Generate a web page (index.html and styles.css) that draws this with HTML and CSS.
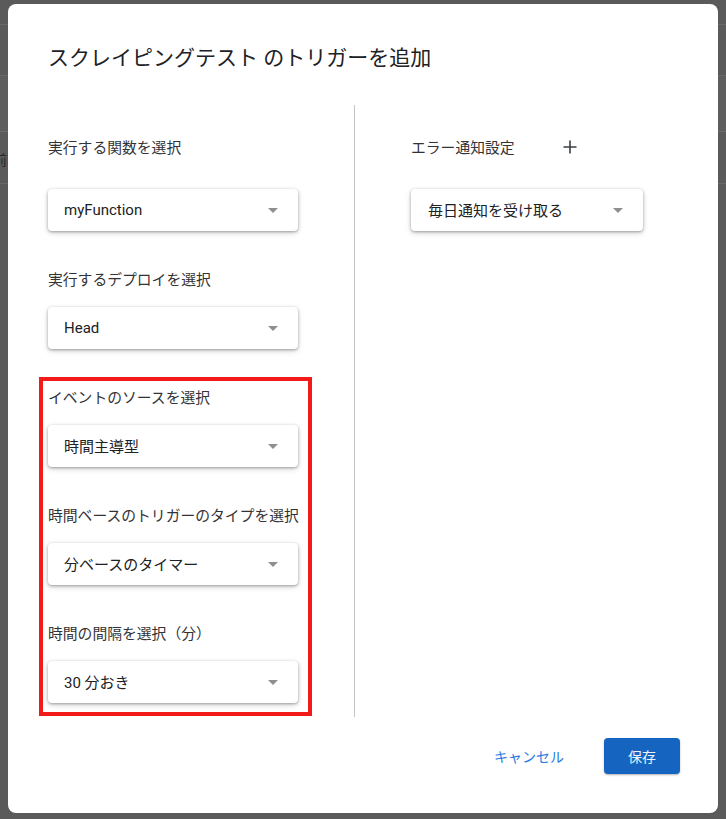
FILE: index.html
```html
<!DOCTYPE html>
<html lang="ja">
<head>
<meta charset="utf-8">
<title>トリガーを追加</title>
<link rel="stylesheet" href="styles.css">
</head>
<body>
<div class="backdrop">
  <div class="bd-row bd-r1"></div>
  <div class="bd-row bd-r2"></div>
  <div class="bd-row bd-r3"></div>
  <div class="bd-row bd-r4"><span class="bd-text">前回</span></div>
  <div class="bd-row bd-r5"></div>
</div>

<div class="dialog">
  <h1 class="title">スクレイピングテスト のトリガーを追加</h1>

  <div class="content">
    <div class="col col-left">
      <div class="field">
        <div class="field-head head-tall">実行する関数を選択</div>
        <div class="select"><span class="select-text">myFunction</span><span class="caret"></span></div>
      </div>
      <div class="field">
        <div class="field-head">実行するデプロイを選択</div>
        <div class="select"><span class="select-text">Head</span><span class="caret"></span></div>
      </div>

      <div class="highlight">
        <div class="field">
          <div class="field-head">イベントのソースを選択</div>
          <div class="select"><span class="select-text">時間主導型</span><span class="caret"></span></div>
        </div>
        <div class="field">
          <div class="field-head">時間ベースのトリガーのタイプを選択</div>
          <div class="select"><span class="select-text">分ベースのタイマー</span><span class="caret"></span></div>
        </div>
        <div class="field">
          <div class="field-head">時間の間隔を選択（分）</div>
          <div class="select"><span class="select-text">30 分おき</span><span class="caret"></span></div>
        </div>
      </div>
    </div>

    <div class="divider"></div>

    <div class="col col-right">
      <div class="field">
        <div class="field-head head-tall">
          <span>エラー通知設定</span>
          <span class="add-btn">
            <svg width="14" height="14" viewBox="0 0 14 14" aria-hidden="true">
              <path d="M7 0.5V13.5M0.5 7H13.5" stroke="#3c4043" stroke-width="1.6" fill="none"/>
            </svg>
          </span>
        </div>
        <div class="select select-narrow"><span class="select-text">毎日通知を受け取る</span><span class="caret"></span></div>
      </div>
    </div>
  </div>

  <div class="footer">
    <button class="btn btn-text">キャンセル</button>
    <button class="btn btn-primary">保存</button>
  </div>
</div>
</body>
</html>
```

FILE: styles.css
```css
* {
  box-sizing: border-box;
}

html, body {
  margin: 0;
  padding: 0;
}

body {
  width: 726px;
  height: 819px;
  overflow: hidden;
  background: #5a5a5a;
  font-family: Roboto, "Noto Sans CJK JP", sans-serif;
  position: relative;
}

/* page behind the overlay */
.backdrop {
  display: flex;
  flex-direction: column;
}

.bd-row {
  border-bottom: 1px solid #6a6a6a;
}

.bd-r1 { height: 25px; }
.bd-r2 { height: 51px; }
.bd-r3 { height: 56px; background: #5e5e5e; }
.bd-r4 {
  height: 52px;
  display: flex;
  align-items: center;
}
.bd-r5 { border-bottom: none; }

.bd-text {
  margin-left: -7px;
  font-size: 14px;
  color: #262626;
  font-family: "Noto Sans CJK JP", sans-serif;
  padding-top: 2px;
}

/* dialog */
.dialog {
  position: absolute;
  left: 8px;
  top: 4px;
  width: 710px;
  height: 809px;
  background: #ffffff;
  border-radius: 8px;
  padding: 40px 38px 0 40px;
  display: flex;
  flex-direction: column;
}

.title {
  margin: 0;
  font-size: 21px;
  line-height: 28px;
  font-weight: 400;
  color: #202124;
}

.content {
  display: flex;
  margin-top: 33px;
}

.col {
  display: flex;
  flex-direction: column;
  align-items: flex-start;
  padding-top: 19px;
}

.col-left {
  width: 306px;
  padding-bottom: 1px;
}

.divider {
  width: 1px;
  background: #c4c4c4;
}

.col-right {
  padding-left: 56px;
}

.field {
  display: flex;
  flex-direction: column;
  align-items: flex-start;
}

.field + .field {
  margin-top: 37px;
}

.field-head {
  height: 20px;
  display: flex;
  align-items: center;
  margin-bottom: 19px;
  font-size: 14.8px;
  color: #333336;
  white-space: nowrap;
}

.head-tall {
  height: 44px;
  margin-bottom: 21px;
}

.add-btn {
  width: 40px;
  height: 40px;
  margin-left: 35px;
  display: flex;
  align-items: center;
  justify-content: center;
  padding-top: 2px;
}

.select {
  width: 250px;
  height: 42px;
  background: #ffffff;
  border-radius: 4px;
  box-shadow: 0 1px 3px rgba(0, 0, 0, 0.32), 0 2px 6px rgba(0, 0, 0, 0.14);
  display: flex;
  align-items: center;
  justify-content: space-between;
  padding: 0 20px 0 16px;
}

.select-narrow {
  width: 232px;
  padding-left: 17px;
}

.select-text {
  font-size: 15px;
  color: #202124;
  white-space: nowrap;
  margin-top: -1px;
}

.caret {
  width: 0;
  height: 0;
  border-left: 5.5px solid transparent;
  border-right: 5.5px solid transparent;
  border-top: 5px solid #8f8f8f;
  margin-top: 1px;
}

.highlight {
  width: 273px;
  margin-top: 28px;
  margin-left: -9px;
  border: 4px solid #f31a1a;
  padding: 5px 10px 9px 5px;
  display: flex;
  flex-direction: column;
  align-items: flex-start;
}

/* footer */
.footer {
  display: flex;
  justify-content: flex-end;
  align-items: center;
  margin-top: 21px;
}

.btn {
  font-family: Roboto, "Noto Sans CJK JP", sans-serif;
  font-size: 14px;
  border: none;
  height: 36px;
  border-radius: 4px;
  cursor: pointer;
}

.btn-text {
  background: transparent;
  color: #2a7ae2;
  padding: 0 16px;
  margin-right: 24px;
}

.btn-primary {
  width: 76px;
  background: #1565c0;
  color: #eef3fb;
  box-shadow: 0 1px 2px rgba(0, 0, 0, 0.3);
}
```
